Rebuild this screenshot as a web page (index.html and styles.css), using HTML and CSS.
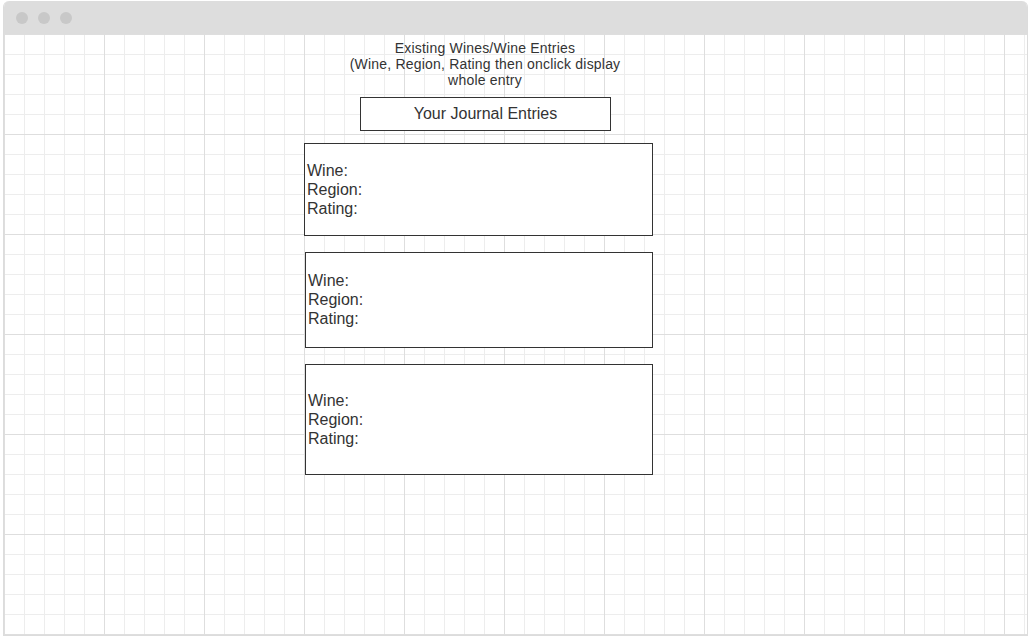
FILE: index.html
```html
<!DOCTYPE html>
<html>
<head>
<meta charset="utf-8">
<link rel="stylesheet" href="styles.css">
</head>
<body>
<div class="window">
  <div class="titlebar">
    <span class="dot"></span><span class="dot"></span><span class="dot"></span>
  </div>
  <div class="canvas">
    <div class="column">
      <div class="note">Existing Wines/Wine Entries<br>(Wine, Region, Rating then onclick display<br>whole entry</div>
      <div class="heading">Your Journal Entries</div>
      <div class="entry entry-1">
        <div>Wine:</div><div>Region:</div><div>Rating:</div>
      </div>
      <div class="entry entry-2">
        <div>Wine:</div><div>Region:</div><div>Rating:</div>
      </div>
      <div class="entry entry-3">
        <div>Wine:</div><div>Region:</div><div>Rating:</div>
      </div>
    </div>
  </div>
</div>
</body>
</html>
```
FILE: styles.css
```css
html, body {
  margin: 0;
  padding: 0;
  background: #fff;
}
body {
  font-family: "Liberation Sans", Arial, sans-serif;
  color: #333;
}
.window {
  margin: 1px 0 0 3px;
  width: 1025px;
  height: 635px;
  box-sizing: border-box;
  border: 1px solid #dcdcdc;
  border-top: none;
  border-radius: 6px 6px 0 0;
  overflow: hidden;
  display: flex;
  flex-direction: column;
}
.titlebar {
  height: 33px;
  background: #dddddd;
  display: flex;
  align-items: center;
  gap: 10px;
  padding-left: 12px;
  flex: none;
}
.dot {
  width: 12px;
  height: 12px;
  border-radius: 50%;
  background: #c8c8c8;
}
.canvas {
  flex: 1;
  background-color: #fff;
  background-image:
    linear-gradient(to right, #dedede 1px, transparent 1px),
    linear-gradient(to bottom, #dedede 1px, transparent 1px),
    linear-gradient(to right, #ededed 1px, transparent 1px),
    linear-gradient(to bottom, #ededed 1px, transparent 1px);
  background-size: 100px 100px, 100px 100px, 20px 20px, 20px 20px;
  padding: 6px 0 0 300px;
}
.column {
  display: flex;
  flex-direction: column;
  align-items: flex-start;
}
.note {
  width: 362px;
  text-align: center;
  font-size: 14px;
  line-height: 16px;
  letter-spacing: 0.2px;
}
.heading {
  margin: 9px 0 0 56px;
  width: 251px;
  height: 34px;
  box-sizing: border-box;
  border: 1px solid #333;
  display: flex;
  align-items: center;
  justify-content: center;
  font-size: 16px;
  background: #fff;
}
.entry {
  box-sizing: border-box;
  border: 1px solid #333;
  background: #fff;
  display: flex;
  flex-direction: column;
  justify-content: center;
  padding-left: 2px;
  font-size: 16px;
  line-height: 19px;
}
.entry-1 {
  margin-top: 12px;
  width: 349px;
  height: 93px;
}
.entry-2 {
  margin: 16px 0 0 1px;
  width: 348px;
  height: 96px;
  padding-bottom: 2px;
}
.entry-3 {
  margin: 16px 0 0 1px;
  width: 348px;
  height: 111px;
}
```
